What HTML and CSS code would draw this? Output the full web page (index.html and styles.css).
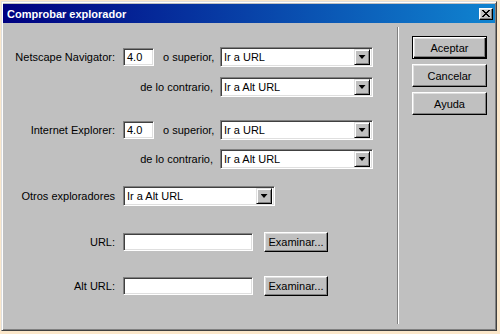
FILE: index.html
```html
<!DOCTYPE html>
<html lang="es">
<head>
    <meta charset="UTF-8">
    <meta name="viewport" content="width=device-width, initial-scale=1.0">
    <title>Comprobar explorador</title>
    <link rel="stylesheet" href="styles.css">
</head>
<body>
    <!-- Dialog window -->
    <div class="dialog">
        <div class="titlebar">
            <span class="title">Comprobar explorador</span>
            <span class="close">
                <svg width="8" height="7" viewBox="0 0 8 7">
                    <path d="M0 0h2v1h-2z M6 0h2v1h-2z M1 1h2v1h-2z M5 1h2v1h-2z M2 2h4v1h-4z M3 3h2v1h-2z M2 4h4v1h-4z M1 5h2v1h-2z M5 5h2v1h-2z M0 6h2v1h-2z M6 6h2v1h-2z" fill="#000000"/>
                </svg>
            </span>
        </div>

        <div class="content">
            <!-- Browser rules -->
            <div class="fields">
                <div class="row row-ns">
                    <span class="lbl">Netscape Navigator:</span>
                    <div class="field version">4.0</div>
                    <span class="mid">o superior,</span>
                    <div class="field combo wide"><span>Ir a URL</span><span class="drop"></span></div>
                </div>
                <div class="row row-ns-else">
                    <span class="lbl long">de lo contrario,</span>
                    <div class="field combo wide"><span>Ir a Alt URL</span><span class="drop"></span></div>
                </div>

                <div class="row row-ie">
                    <span class="lbl">Internet Explorer:</span>
                    <div class="field version">4.0</div>
                    <span class="mid">o superior,</span>
                    <div class="field combo wide"><span>Ir a URL</span><span class="drop"></span></div>
                </div>
                <div class="row row-ie-else">
                    <span class="lbl long">de lo contrario,</span>
                    <div class="field combo wide"><span>Ir a Alt URL</span><span class="drop"></span></div>
                </div>

                <div class="row row-other">
                    <span class="lbl">Otros exploradores</span>
                    <div class="field combo short"><span>Ir a Alt URL</span><span class="drop"></span></div>
                </div>

                <div class="row row-url">
                    <span class="lbl">URL:</span>
                    <div class="field url"></div>
                    <button class="btn browse">Examinar...</button>
                </div>
                <div class="row row-alt">
                    <span class="lbl">Alt URL:</span>
                    <div class="field url"></div>
                    <button class="btn browse">Examinar...</button>
                </div>
            </div>

            <div class="sep"></div>

            <!-- Dialog buttons -->
            <div class="actions">
                <button class="btn main default">Aceptar</button>
                <button class="btn main">Cancelar</button>
                <button class="btn main">Ayuda</button>
            </div>
        </div>
    </div>
</body>
</html>
```

FILE: styles.css
```css
/* Global Styles */
body {
    margin: 0;
    background-color: #fbe7ca;
    font-family: 'Liberation Sans', Arial, sans-serif;
    font-size: 11px;
    color: #000000;
}

/* Window frame */
.dialog {
    box-sizing: border-box;
    width: 496px;
    height: 330px;
    margin: 1px 0 0 1px;
    padding: 2px 1px 1px 1px;
    background-color: #c0c0c0;
    border: 1px solid;
    border-color: #dfdfdf #404040 #404040 #dfdfdf;
    box-shadow: inset 1px 1px #ffffff, inset -1px -1px #808080;
    display: flex;
    flex-direction: column;
}

.titlebar {
    height: 19px;
    display: flex;
    align-items: center;
    justify-content: space-between;
    padding: 0 2px 0 4px;
    background: linear-gradient(to right, #000080, #1084d0);
    color: #ffffff;
    font-weight: bold;
}

.close {
    box-sizing: border-box;
    width: 14px;
    height: 12px;
    display: flex;
    align-items: center;
    justify-content: center;
    background-color: #c0c0c0;
    border: 1px solid;
    border-color: #ffffff #000000 #000000 #ffffff;
    box-shadow: inset -1px -1px #808080, inset 1px 1px #dfdfdf;
}

/* Content */
.content {
    flex: 1;
    display: flex;
}

.fields {
    width: 394px;
    padding-top: 24px;
}

.row {
    display: flex;
    align-items: center;
    height: 20px;
}

.row-ns-else { margin-top: 10px; }
.row-ie { margin-top: 23px; }
.row-ie-else { margin-top: 9px; }
.row-other { margin-top: 17px; }
.row-url { margin-top: 26px; }
.row-alt { margin-top: 24px; }

.lbl {
    width: 112px;
    margin-right: 8px;
    text-align: right;
    white-space: nowrap;
}

.lbl.long {
    width: 210px;
    margin-right: 7px;
}

.mid {
    width: 57px;
    padding-left: 9px;
}

/* Sunken fields */
.field {
    box-sizing: border-box;
    height: 18px;
    padding: 0 3px;
    display: flex;
    align-items: center;
    background-color: #ffffff;
    border: 1px solid;
    border-color: #808080 #ffffff #ffffff #808080;
    box-shadow: inset 1px 1px #404040, inset -1px -1px #dfdfdf;
}

.field.version {
    width: 31px;
}

.field.url {
    width: 130px;
}

.combo {
    height: 20px;
    padding: 2px 2px 2px 3px;
    justify-content: space-between;
}

.combo.wide {
    width: 153px;
}

.combo.short {
    width: 152px;
}

.drop {
    box-sizing: border-box;
    width: 16px;
    height: 16px;
    display: flex;
    align-items: center;
    justify-content: center;
    background-color: #c0c0c0;
    border: 1px solid;
    border-color: #dfdfdf #000000 #000000 #dfdfdf;
    box-shadow: inset 1px 1px #ffffff, inset -1px -1px #808080;
}

.drop::after {
    content: '';
    width: 7px;
    height: 4px;
    background-color: #000000;
    clip-path: polygon(0 0, 100% 0, 50% 100%);
}

/* Raised buttons */
.btn {
    box-sizing: border-box;
    display: flex;
    align-items: center;
    justify-content: center;
    padding: 0;
    font-family: inherit;
    font-size: 11px;
    color: #000000;
    background-color: #c0c0c0;
    border: 1px solid;
    border-color: #ffffff #000000 #000000 #ffffff;
    box-shadow: inset -1px -1px #808080, inset 1px 1px #dfdfdf;
}

.btn.browse {
    width: 64px;
    height: 20px;
    margin-left: 11px;
}

.btn.main {
    width: 75px;
    height: 23px;
    margin-bottom: 5px;
}

.btn.default {
    border-color: #000000;
    box-shadow: inset 1px 1px #ffffff, inset -1px -1px #000000, inset -2px -2px #808080, inset 2px 2px #dfdfdf;
}

.sep {
    width: 0;
    margin: 4px 0 5px;
    border-left: 1px solid #808080;
    border-right: 1px solid #ffffff;
}

.actions {
    margin-left: 13px;
    padding-top: 13px;
}
```
